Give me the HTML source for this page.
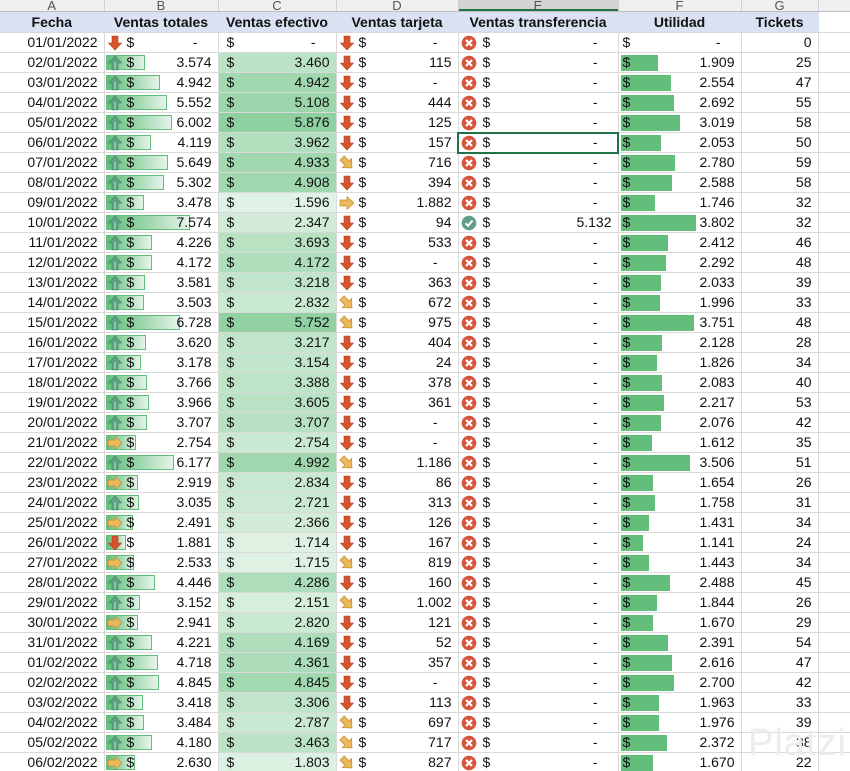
<!DOCTYPE html>
<html><head><meta charset="utf-8"><style>
html,body{margin:0;padding:0;background:#fff;width:850px;height:771px;overflow:hidden}
body{font-family:"Liberation Sans",Arial,sans-serif;font-size:14px;color:#111;position:relative}
table{border-collapse:collapse;table-layout:fixed;position:absolute;left:0;top:0;width:858px}
td{height:19px;border-right:1px solid #d9d9d9;border-bottom:1px solid #d9d9d9;position:relative;text-align:right;padding:0 6px 0 0;white-space:nowrap;line-height:19px;overflow:visible}
tr.let td{height:11px;background:#efefef;color:#555;font-size:13px;text-align:center;line-height:0;padding:0;border-right:1px solid #cfcfcf;border-bottom:1px solid #bdbdbd;overflow:hidden}
tr.let td.sel{background:#d3d3d3;box-shadow:inset 0 -2px 0 #217346}
tr.hd td{height:20px;background:#d9e1f2;font-weight:bold;text-align:center;padding:0;border-right:1px solid #d9e1f2;border-bottom:1px solid #d9d9d9}
tr.hd td.h{background:#fff;border-right:none}
.d{position:absolute;left:22px;top:0}
.c .d{left:8px}
.f .d{left:4px}
.e .d{left:24px}
.z{padding-right:20px}
svg.ic{position:absolute;left:2px;top:2px;width:16px;height:16px;z-index:1}
.b::before{content:"";position:absolute;left:1px;top:2px;height:15px;width:calc(var(--b) * 84px / 7574);background:linear-gradient(90deg,#63be7b 0%,#9dd6ac 50%,#e6f4ea 100%);border:1px solid #63be7b;box-sizing:border-box}
.c::before{content:"";position:absolute;left:0;top:0;right:0;bottom:0;background:#63be7b;opacity:calc(var(--c) / 5876 * 0.72)}
.f::before{content:"";position:absolute;left:2px;top:2px;height:16px;width:calc(var(--f) * 75px / 3802);background:#63be7b}
.num{position:relative}
.selc{outline:2px solid #217346;outline-offset:-1px;z-index:2}
.wm{position:absolute;left:748px;top:722px;font-size:38px;color:#ececec;font-weight:normal;letter-spacing:1px}
</style></head><body>
<svg width="0" height="0" style="position:absolute">
<defs>
<symbol id="dn" viewBox="0 0 16 16"><polygon points="5,1 11,1 11,8 14.5,8 8,15 1.5,8 5,8" fill="#d7532e" stroke="#b8401f" stroke-width=".6"/></symbol>
<symbol id="up" viewBox="0 0 16 16"><polygon points="5,15 11,15 11,8 14.5,8 8,1 1.5,8 5,8" fill="#5fa183" stroke="#3f8766" stroke-width=".6"/><polygon points="7,14 9,14 9,7 7,7" fill="#8cc4ab"/></symbol>
<symbol id="rt" viewBox="0 0 16 16"><polygon points="1,5 8,5 8,1.5 15,8 8,14.5 8,11 1,11" fill="#eab85e" stroke="#c48d2c" stroke-width=".7"/></symbol>
<symbol id="dg" viewBox="0 0 16 16"><g transform="rotate(45 8 8)"><polygon points="1,5 8,5 8,1.5 15,8 8,14.5 8,11 1,11" fill="#eab85e" stroke="#c48d2c" stroke-width=".7"/></g></symbol>
<symbol id="x" viewBox="0 0 16 16"><circle cx="8" cy="8" r="7.3" fill="#d4553a"/><path d="M5 5L11 11M11 5L5 11" stroke="#fff" stroke-width="2.2"/></symbol>
<symbol id="ok" viewBox="0 0 16 16"><circle cx="8" cy="8" r="7.3" fill="#5e9f87"/><path d="M4.5 8.3L7 10.8L11.5 5.5" stroke="#fff" stroke-width="2" fill="none"/></symbol>
</defs></svg>
<table>
<colgroup><col style="width:104px"><col style="width:114px"><col style="width:118px"><col style="width:122px"><col style="width:160px"><col style="width:123px"><col style="width:77px"><col style="width:40px"></colgroup>
<tr class="let"><td><span>A</span></td><td><span>B</span></td><td><span>C</span></td><td><span>D</span></td><td class="sel"><span>E</span></td><td><span>F</span></td><td><span>G</span></td><td></td></tr>
<tr class="hd"><td>Fecha</td><td>Ventas totales</td><td>Ventas efectivo</td><td>Ventas tarjeta</td><td>Ventas transferencia</td><td>Utilidad</td><td>Tickets</td><td class="h"></td></tr>
<tr><td>01/01/2022</td><td class="z"><svg class="ic"><use href="#dn"/></svg><span class="d">$</span>-</td><td class="z c" style="--c:0"><span class="d">$</span><span class="num">-</span></td><td class="z"><svg class="ic"><use href="#dn"/></svg><span class="d">$</span>-</td><td class="e z"><svg class="ic"><use href="#x"/></svg><span class="d">$</span>-</td><td class="z f" style="--f:0"><span class="d">$</span><span class="num">-</span></td><td>0</td><td></td></tr>
<tr><td>02/01/2022</td><td class="b" style="--b:3574"><svg class="ic"><use href="#up"/></svg><span class="d">$</span><span class="num">3.574</span></td><td class="c" style="--c:3460"><span class="d">$</span><span class="num">3.460</span></td><td><svg class="ic"><use href="#dn"/></svg><span class="d">$</span>115</td><td class="e z"><svg class="ic"><use href="#x"/></svg><span class="d">$</span>-</td><td class="f" style="--f:1909"><span class="d">$</span><span class="num">1.909</span></td><td>25</td><td></td></tr>
<tr><td>03/01/2022</td><td class="b" style="--b:4942"><svg class="ic"><use href="#up"/></svg><span class="d">$</span><span class="num">4.942</span></td><td class="c" style="--c:4942"><span class="d">$</span><span class="num">4.942</span></td><td class="z"><svg class="ic"><use href="#dn"/></svg><span class="d">$</span>-</td><td class="e z"><svg class="ic"><use href="#x"/></svg><span class="d">$</span>-</td><td class="f" style="--f:2554"><span class="d">$</span><span class="num">2.554</span></td><td>47</td><td></td></tr>
<tr><td>04/01/2022</td><td class="b" style="--b:5552"><svg class="ic"><use href="#up"/></svg><span class="d">$</span><span class="num">5.552</span></td><td class="c" style="--c:5108"><span class="d">$</span><span class="num">5.108</span></td><td><svg class="ic"><use href="#dn"/></svg><span class="d">$</span>444</td><td class="e z"><svg class="ic"><use href="#x"/></svg><span class="d">$</span>-</td><td class="f" style="--f:2692"><span class="d">$</span><span class="num">2.692</span></td><td>55</td><td></td></tr>
<tr><td>05/01/2022</td><td class="b" style="--b:6002"><svg class="ic"><use href="#up"/></svg><span class="d">$</span><span class="num">6.002</span></td><td class="c" style="--c:5876"><span class="d">$</span><span class="num">5.876</span></td><td><svg class="ic"><use href="#dn"/></svg><span class="d">$</span>125</td><td class="e z"><svg class="ic"><use href="#x"/></svg><span class="d">$</span>-</td><td class="f" style="--f:3019"><span class="d">$</span><span class="num">3.019</span></td><td>58</td><td></td></tr>
<tr><td>06/01/2022</td><td class="b" style="--b:4119"><svg class="ic"><use href="#up"/></svg><span class="d">$</span><span class="num">4.119</span></td><td class="c" style="--c:3962"><span class="d">$</span><span class="num">3.962</span></td><td><svg class="ic"><use href="#dn"/></svg><span class="d">$</span>157</td><td class="e z selc"><svg class="ic"><use href="#x"/></svg><span class="d">$</span>-</td><td class="f" style="--f:2053"><span class="d">$</span><span class="num">2.053</span></td><td>50</td><td></td></tr>
<tr><td>07/01/2022</td><td class="b" style="--b:5649"><svg class="ic"><use href="#up"/></svg><span class="d">$</span><span class="num">5.649</span></td><td class="c" style="--c:4933"><span class="d">$</span><span class="num">4.933</span></td><td><svg class="ic"><use href="#dg"/></svg><span class="d">$</span>716</td><td class="e z"><svg class="ic"><use href="#x"/></svg><span class="d">$</span>-</td><td class="f" style="--f:2780"><span class="d">$</span><span class="num">2.780</span></td><td>59</td><td></td></tr>
<tr><td>08/01/2022</td><td class="b" style="--b:5302"><svg class="ic"><use href="#up"/></svg><span class="d">$</span><span class="num">5.302</span></td><td class="c" style="--c:4908"><span class="d">$</span><span class="num">4.908</span></td><td><svg class="ic"><use href="#dn"/></svg><span class="d">$</span>394</td><td class="e z"><svg class="ic"><use href="#x"/></svg><span class="d">$</span>-</td><td class="f" style="--f:2588"><span class="d">$</span><span class="num">2.588</span></td><td>58</td><td></td></tr>
<tr><td>09/01/2022</td><td class="b" style="--b:3478"><svg class="ic"><use href="#up"/></svg><span class="d">$</span><span class="num">3.478</span></td><td class="c" style="--c:1596"><span class="d">$</span><span class="num">1.596</span></td><td><svg class="ic"><use href="#rt"/></svg><span class="d">$</span>1.882</td><td class="e z"><svg class="ic"><use href="#x"/></svg><span class="d">$</span>-</td><td class="f" style="--f:1746"><span class="d">$</span><span class="num">1.746</span></td><td>32</td><td></td></tr>
<tr><td>10/01/2022</td><td class="b" style="--b:7574"><svg class="ic"><use href="#up"/></svg><span class="d">$</span><span class="num">7.574</span></td><td class="c" style="--c:2347"><span class="d">$</span><span class="num">2.347</span></td><td><svg class="ic"><use href="#dn"/></svg><span class="d">$</span>94</td><td class="e"><svg class="ic"><use href="#ok"/></svg><span class="d">$</span>5.132</td><td class="f" style="--f:3802"><span class="d">$</span><span class="num">3.802</span></td><td>32</td><td></td></tr>
<tr><td>11/01/2022</td><td class="b" style="--b:4226"><svg class="ic"><use href="#up"/></svg><span class="d">$</span><span class="num">4.226</span></td><td class="c" style="--c:3693"><span class="d">$</span><span class="num">3.693</span></td><td><svg class="ic"><use href="#dn"/></svg><span class="d">$</span>533</td><td class="e z"><svg class="ic"><use href="#x"/></svg><span class="d">$</span>-</td><td class="f" style="--f:2412"><span class="d">$</span><span class="num">2.412</span></td><td>46</td><td></td></tr>
<tr><td>12/01/2022</td><td class="b" style="--b:4172"><svg class="ic"><use href="#up"/></svg><span class="d">$</span><span class="num">4.172</span></td><td class="c" style="--c:4172"><span class="d">$</span><span class="num">4.172</span></td><td class="z"><svg class="ic"><use href="#dn"/></svg><span class="d">$</span>-</td><td class="e z"><svg class="ic"><use href="#x"/></svg><span class="d">$</span>-</td><td class="f" style="--f:2292"><span class="d">$</span><span class="num">2.292</span></td><td>48</td><td></td></tr>
<tr><td>13/01/2022</td><td class="b" style="--b:3581"><svg class="ic"><use href="#up"/></svg><span class="d">$</span><span class="num">3.581</span></td><td class="c" style="--c:3218"><span class="d">$</span><span class="num">3.218</span></td><td><svg class="ic"><use href="#dn"/></svg><span class="d">$</span>363</td><td class="e z"><svg class="ic"><use href="#x"/></svg><span class="d">$</span>-</td><td class="f" style="--f:2033"><span class="d">$</span><span class="num">2.033</span></td><td>39</td><td></td></tr>
<tr><td>14/01/2022</td><td class="b" style="--b:3503"><svg class="ic"><use href="#up"/></svg><span class="d">$</span><span class="num">3.503</span></td><td class="c" style="--c:2832"><span class="d">$</span><span class="num">2.832</span></td><td><svg class="ic"><use href="#dg"/></svg><span class="d">$</span>672</td><td class="e z"><svg class="ic"><use href="#x"/></svg><span class="d">$</span>-</td><td class="f" style="--f:1996"><span class="d">$</span><span class="num">1.996</span></td><td>33</td><td></td></tr>
<tr><td>15/01/2022</td><td class="b" style="--b:6728"><svg class="ic"><use href="#up"/></svg><span class="d">$</span><span class="num">6.728</span></td><td class="c" style="--c:5752"><span class="d">$</span><span class="num">5.752</span></td><td><svg class="ic"><use href="#dg"/></svg><span class="d">$</span>975</td><td class="e z"><svg class="ic"><use href="#x"/></svg><span class="d">$</span>-</td><td class="f" style="--f:3751"><span class="d">$</span><span class="num">3.751</span></td><td>48</td><td></td></tr>
<tr><td>16/01/2022</td><td class="b" style="--b:3620"><svg class="ic"><use href="#up"/></svg><span class="d">$</span><span class="num">3.620</span></td><td class="c" style="--c:3217"><span class="d">$</span><span class="num">3.217</span></td><td><svg class="ic"><use href="#dn"/></svg><span class="d">$</span>404</td><td class="e z"><svg class="ic"><use href="#x"/></svg><span class="d">$</span>-</td><td class="f" style="--f:2128"><span class="d">$</span><span class="num">2.128</span></td><td>28</td><td></td></tr>
<tr><td>17/01/2022</td><td class="b" style="--b:3178"><svg class="ic"><use href="#up"/></svg><span class="d">$</span><span class="num">3.178</span></td><td class="c" style="--c:3154"><span class="d">$</span><span class="num">3.154</span></td><td><svg class="ic"><use href="#dn"/></svg><span class="d">$</span>24</td><td class="e z"><svg class="ic"><use href="#x"/></svg><span class="d">$</span>-</td><td class="f" style="--f:1826"><span class="d">$</span><span class="num">1.826</span></td><td>34</td><td></td></tr>
<tr><td>18/01/2022</td><td class="b" style="--b:3766"><svg class="ic"><use href="#up"/></svg><span class="d">$</span><span class="num">3.766</span></td><td class="c" style="--c:3388"><span class="d">$</span><span class="num">3.388</span></td><td><svg class="ic"><use href="#dn"/></svg><span class="d">$</span>378</td><td class="e z"><svg class="ic"><use href="#x"/></svg><span class="d">$</span>-</td><td class="f" style="--f:2083"><span class="d">$</span><span class="num">2.083</span></td><td>40</td><td></td></tr>
<tr><td>19/01/2022</td><td class="b" style="--b:3966"><svg class="ic"><use href="#up"/></svg><span class="d">$</span><span class="num">3.966</span></td><td class="c" style="--c:3605"><span class="d">$</span><span class="num">3.605</span></td><td><svg class="ic"><use href="#dn"/></svg><span class="d">$</span>361</td><td class="e z"><svg class="ic"><use href="#x"/></svg><span class="d">$</span>-</td><td class="f" style="--f:2217"><span class="d">$</span><span class="num">2.217</span></td><td>53</td><td></td></tr>
<tr><td>20/01/2022</td><td class="b" style="--b:3707"><svg class="ic"><use href="#up"/></svg><span class="d">$</span><span class="num">3.707</span></td><td class="c" style="--c:3707"><span class="d">$</span><span class="num">3.707</span></td><td class="z"><svg class="ic"><use href="#dn"/></svg><span class="d">$</span>-</td><td class="e z"><svg class="ic"><use href="#x"/></svg><span class="d">$</span>-</td><td class="f" style="--f:2076"><span class="d">$</span><span class="num">2.076</span></td><td>42</td><td></td></tr>
<tr><td>21/01/2022</td><td class="b" style="--b:2754"><svg class="ic"><use href="#rt"/></svg><span class="d">$</span><span class="num">2.754</span></td><td class="c" style="--c:2754"><span class="d">$</span><span class="num">2.754</span></td><td class="z"><svg class="ic"><use href="#dn"/></svg><span class="d">$</span>-</td><td class="e z"><svg class="ic"><use href="#x"/></svg><span class="d">$</span>-</td><td class="f" style="--f:1612"><span class="d">$</span><span class="num">1.612</span></td><td>35</td><td></td></tr>
<tr><td>22/01/2022</td><td class="b" style="--b:6177"><svg class="ic"><use href="#up"/></svg><span class="d">$</span><span class="num">6.177</span></td><td class="c" style="--c:4992"><span class="d">$</span><span class="num">4.992</span></td><td><svg class="ic"><use href="#dg"/></svg><span class="d">$</span>1.186</td><td class="e z"><svg class="ic"><use href="#x"/></svg><span class="d">$</span>-</td><td class="f" style="--f:3506"><span class="d">$</span><span class="num">3.506</span></td><td>51</td><td></td></tr>
<tr><td>23/01/2022</td><td class="b" style="--b:2919"><svg class="ic"><use href="#rt"/></svg><span class="d">$</span><span class="num">2.919</span></td><td class="c" style="--c:2834"><span class="d">$</span><span class="num">2.834</span></td><td><svg class="ic"><use href="#dn"/></svg><span class="d">$</span>86</td><td class="e z"><svg class="ic"><use href="#x"/></svg><span class="d">$</span>-</td><td class="f" style="--f:1654"><span class="d">$</span><span class="num">1.654</span></td><td>26</td><td></td></tr>
<tr><td>24/01/2022</td><td class="b" style="--b:3035"><svg class="ic"><use href="#up"/></svg><span class="d">$</span><span class="num">3.035</span></td><td class="c" style="--c:2721"><span class="d">$</span><span class="num">2.721</span></td><td><svg class="ic"><use href="#dn"/></svg><span class="d">$</span>313</td><td class="e z"><svg class="ic"><use href="#x"/></svg><span class="d">$</span>-</td><td class="f" style="--f:1758"><span class="d">$</span><span class="num">1.758</span></td><td>31</td><td></td></tr>
<tr><td>25/01/2022</td><td class="b" style="--b:2491"><svg class="ic"><use href="#rt"/></svg><span class="d">$</span><span class="num">2.491</span></td><td class="c" style="--c:2366"><span class="d">$</span><span class="num">2.366</span></td><td><svg class="ic"><use href="#dn"/></svg><span class="d">$</span>126</td><td class="e z"><svg class="ic"><use href="#x"/></svg><span class="d">$</span>-</td><td class="f" style="--f:1431"><span class="d">$</span><span class="num">1.431</span></td><td>34</td><td></td></tr>
<tr><td>26/01/2022</td><td class="b" style="--b:1881"><svg class="ic"><use href="#dn"/></svg><span class="d">$</span><span class="num">1.881</span></td><td class="c" style="--c:1714"><span class="d">$</span><span class="num">1.714</span></td><td><svg class="ic"><use href="#dn"/></svg><span class="d">$</span>167</td><td class="e z"><svg class="ic"><use href="#x"/></svg><span class="d">$</span>-</td><td class="f" style="--f:1141"><span class="d">$</span><span class="num">1.141</span></td><td>24</td><td></td></tr>
<tr><td>27/01/2022</td><td class="b" style="--b:2533"><svg class="ic"><use href="#rt"/></svg><span class="d">$</span><span class="num">2.533</span></td><td class="c" style="--c:1715"><span class="d">$</span><span class="num">1.715</span></td><td><svg class="ic"><use href="#dg"/></svg><span class="d">$</span>819</td><td class="e z"><svg class="ic"><use href="#x"/></svg><span class="d">$</span>-</td><td class="f" style="--f:1443"><span class="d">$</span><span class="num">1.443</span></td><td>34</td><td></td></tr>
<tr><td>28/01/2022</td><td class="b" style="--b:4446"><svg class="ic"><use href="#up"/></svg><span class="d">$</span><span class="num">4.446</span></td><td class="c" style="--c:4286"><span class="d">$</span><span class="num">4.286</span></td><td><svg class="ic"><use href="#dn"/></svg><span class="d">$</span>160</td><td class="e z"><svg class="ic"><use href="#x"/></svg><span class="d">$</span>-</td><td class="f" style="--f:2488"><span class="d">$</span><span class="num">2.488</span></td><td>45</td><td></td></tr>
<tr><td>29/01/2022</td><td class="b" style="--b:3152"><svg class="ic"><use href="#up"/></svg><span class="d">$</span><span class="num">3.152</span></td><td class="c" style="--c:2151"><span class="d">$</span><span class="num">2.151</span></td><td><svg class="ic"><use href="#dg"/></svg><span class="d">$</span>1.002</td><td class="e z"><svg class="ic"><use href="#x"/></svg><span class="d">$</span>-</td><td class="f" style="--f:1844"><span class="d">$</span><span class="num">1.844</span></td><td>26</td><td></td></tr>
<tr><td>30/01/2022</td><td class="b" style="--b:2941"><svg class="ic"><use href="#rt"/></svg><span class="d">$</span><span class="num">2.941</span></td><td class="c" style="--c:2820"><span class="d">$</span><span class="num">2.820</span></td><td><svg class="ic"><use href="#dn"/></svg><span class="d">$</span>121</td><td class="e z"><svg class="ic"><use href="#x"/></svg><span class="d">$</span>-</td><td class="f" style="--f:1670"><span class="d">$</span><span class="num">1.670</span></td><td>29</td><td></td></tr>
<tr><td>31/01/2022</td><td class="b" style="--b:4221"><svg class="ic"><use href="#up"/></svg><span class="d">$</span><span class="num">4.221</span></td><td class="c" style="--c:4169"><span class="d">$</span><span class="num">4.169</span></td><td><svg class="ic"><use href="#dn"/></svg><span class="d">$</span>52</td><td class="e z"><svg class="ic"><use href="#x"/></svg><span class="d">$</span>-</td><td class="f" style="--f:2391"><span class="d">$</span><span class="num">2.391</span></td><td>54</td><td></td></tr>
<tr><td>01/02/2022</td><td class="b" style="--b:4718"><svg class="ic"><use href="#up"/></svg><span class="d">$</span><span class="num">4.718</span></td><td class="c" style="--c:4361"><span class="d">$</span><span class="num">4.361</span></td><td><svg class="ic"><use href="#dn"/></svg><span class="d">$</span>357</td><td class="e z"><svg class="ic"><use href="#x"/></svg><span class="d">$</span>-</td><td class="f" style="--f:2616"><span class="d">$</span><span class="num">2.616</span></td><td>47</td><td></td></tr>
<tr><td>02/02/2022</td><td class="b" style="--b:4845"><svg class="ic"><use href="#up"/></svg><span class="d">$</span><span class="num">4.845</span></td><td class="c" style="--c:4845"><span class="d">$</span><span class="num">4.845</span></td><td class="z"><svg class="ic"><use href="#dn"/></svg><span class="d">$</span>-</td><td class="e z"><svg class="ic"><use href="#x"/></svg><span class="d">$</span>-</td><td class="f" style="--f:2700"><span class="d">$</span><span class="num">2.700</span></td><td>42</td><td></td></tr>
<tr><td>03/02/2022</td><td class="b" style="--b:3418"><svg class="ic"><use href="#up"/></svg><span class="d">$</span><span class="num">3.418</span></td><td class="c" style="--c:3306"><span class="d">$</span><span class="num">3.306</span></td><td><svg class="ic"><use href="#dn"/></svg><span class="d">$</span>113</td><td class="e z"><svg class="ic"><use href="#x"/></svg><span class="d">$</span>-</td><td class="f" style="--f:1963"><span class="d">$</span><span class="num">1.963</span></td><td>33</td><td></td></tr>
<tr><td>04/02/2022</td><td class="b" style="--b:3484"><svg class="ic"><use href="#up"/></svg><span class="d">$</span><span class="num">3.484</span></td><td class="c" style="--c:2787"><span class="d">$</span><span class="num">2.787</span></td><td><svg class="ic"><use href="#dg"/></svg><span class="d">$</span>697</td><td class="e z"><svg class="ic"><use href="#x"/></svg><span class="d">$</span>-</td><td class="f" style="--f:1976"><span class="d">$</span><span class="num">1.976</span></td><td>39</td><td></td></tr>
<tr><td>05/02/2022</td><td class="b" style="--b:4180"><svg class="ic"><use href="#up"/></svg><span class="d">$</span><span class="num">4.180</span></td><td class="c" style="--c:3463"><span class="d">$</span><span class="num">3.463</span></td><td><svg class="ic"><use href="#dg"/></svg><span class="d">$</span>717</td><td class="e z"><svg class="ic"><use href="#x"/></svg><span class="d">$</span>-</td><td class="f" style="--f:2372"><span class="d">$</span><span class="num">2.372</span></td><td>38</td><td></td></tr>
<tr><td>06/02/2022</td><td class="b" style="--b:2630"><svg class="ic"><use href="#rt"/></svg><span class="d">$</span><span class="num">2.630</span></td><td class="c" style="--c:1803"><span class="d">$</span><span class="num">1.803</span></td><td><svg class="ic"><use href="#dg"/></svg><span class="d">$</span>827</td><td class="e z"><svg class="ic"><use href="#x"/></svg><span class="d">$</span>-</td><td class="f" style="--f:1670"><span class="d">$</span><span class="num">1.670</span></td><td>22</td><td></td></tr>
</table>
<div class="wm">Platzi</div>
</body></html>
